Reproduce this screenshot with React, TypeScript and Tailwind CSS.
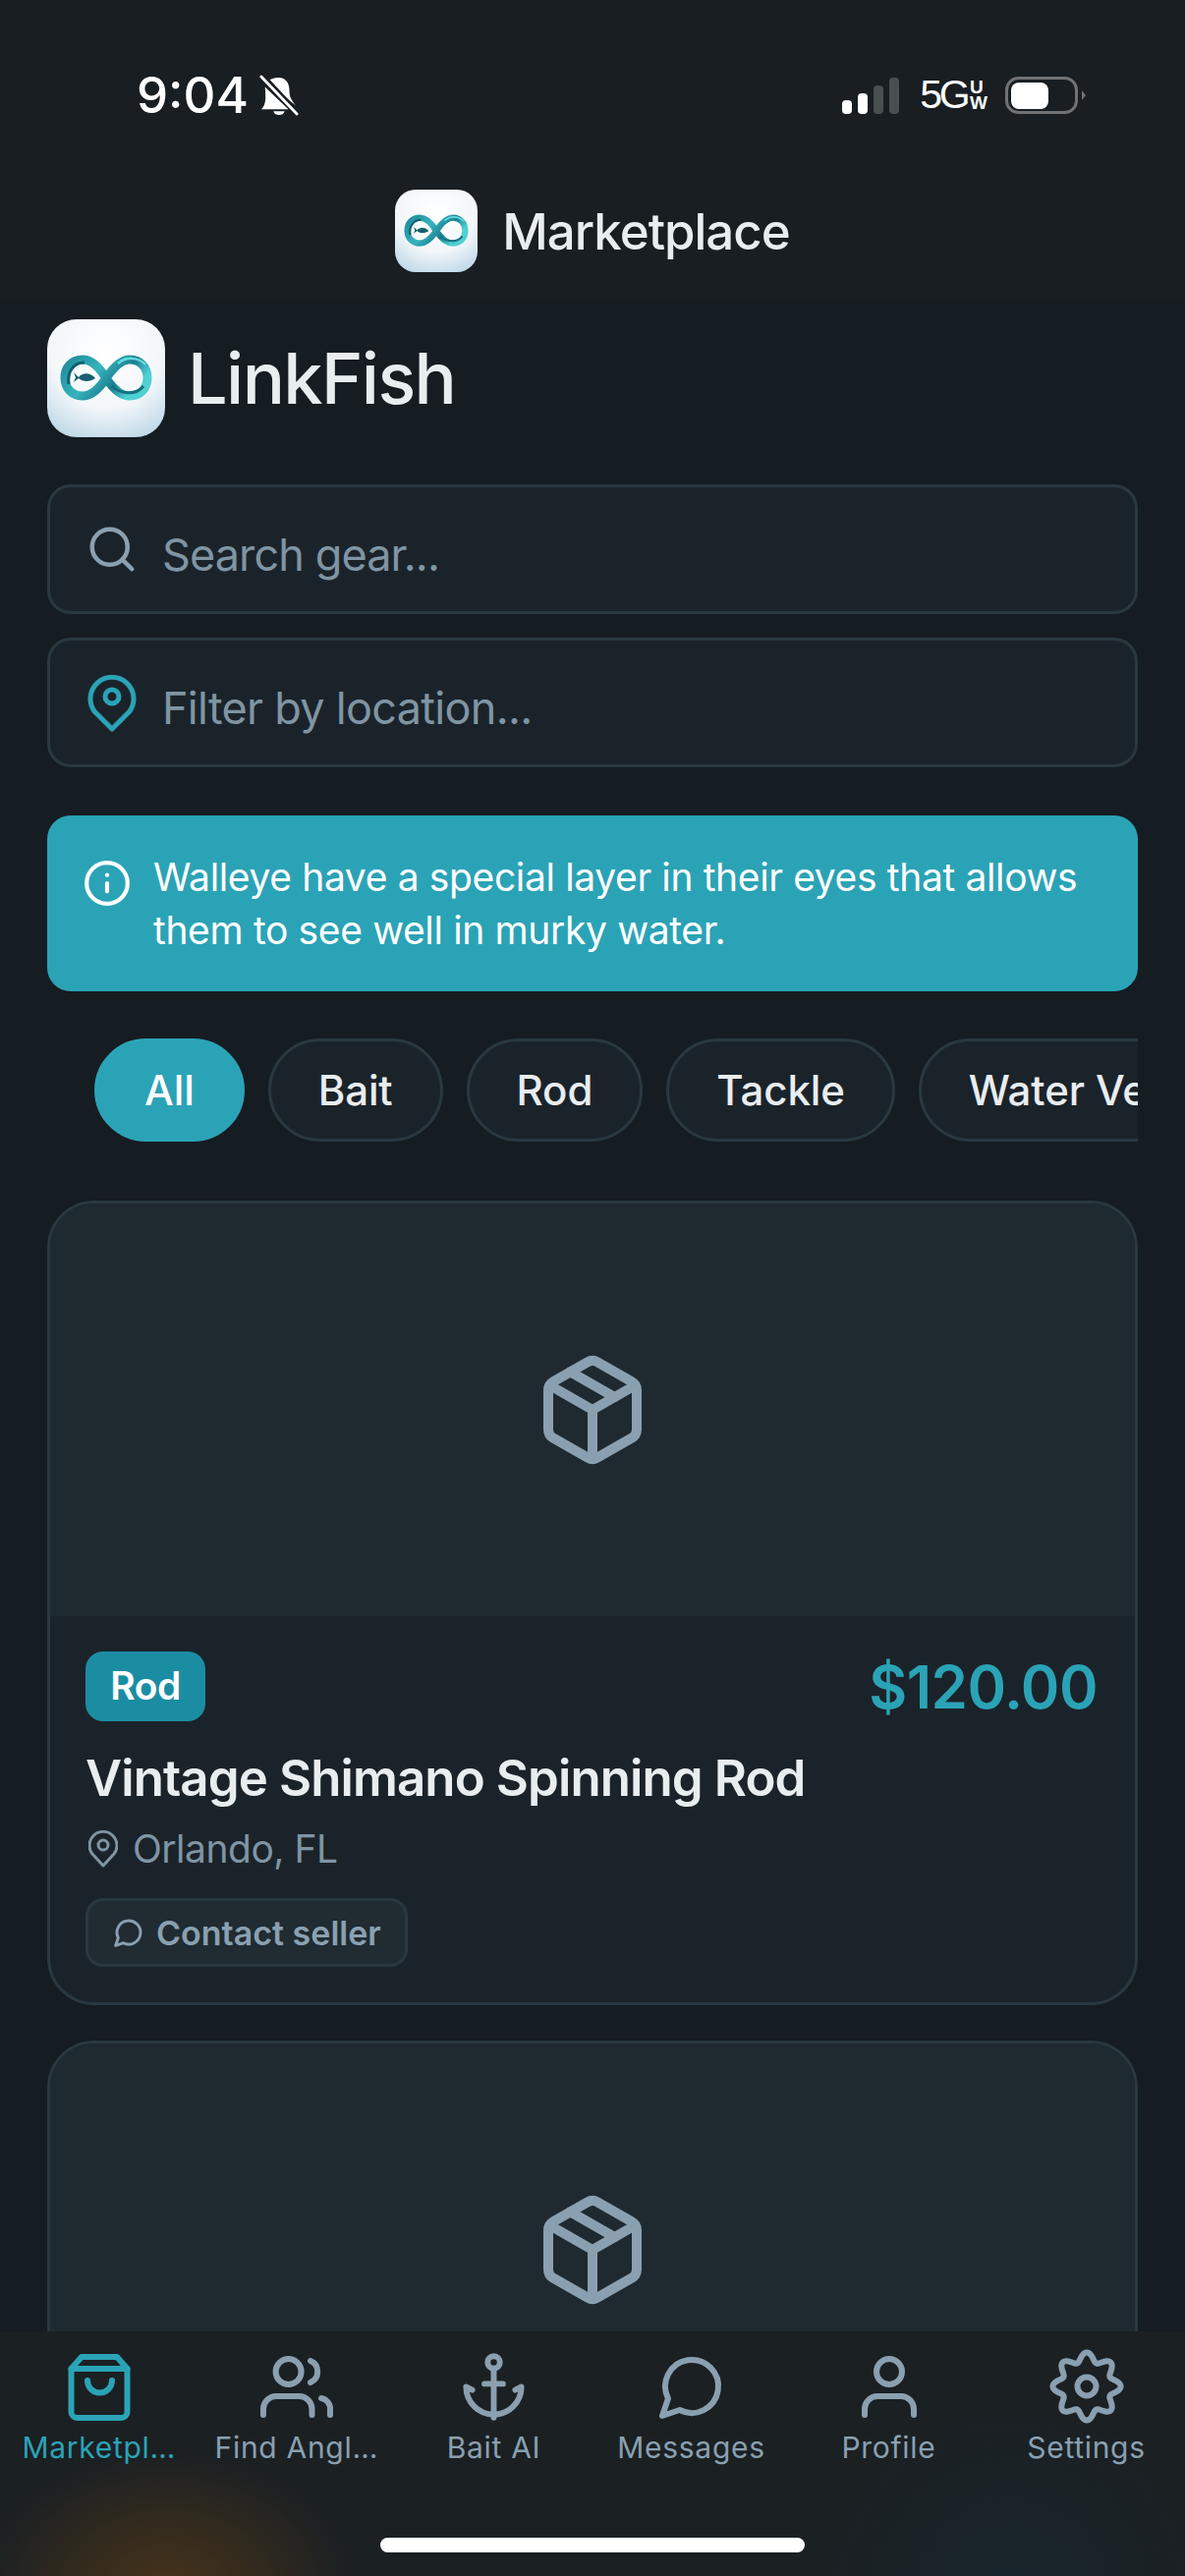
import { Anchor, Info, Package, Search } from "lucide-react";

const CHIPS = ["All", "Bait", "Rod", "Tackle", "Water Vessels"];

const gearPath = () => {
  const pts: string[] = [];
  for (let i = 0; i < 144; i++) {
    const a = (i / 144) * Math.PI * 2;
    const r = 30 + 4.6 * Math.cos(8 * a);
    const x = 39 + r * Math.sin(a);
    const y = 39 - r * Math.cos(a);
    pts.push(`${i === 0 ? "M" : "L"}${x.toFixed(2)} ${y.toFixed(2)}`);
  }
  return pts.join(" ") + " Z";
};

function Logo({ size, id, className }: { size: number; id: string; className: string }) {
  const loop =
    "M60 60C52 47 44 41 36 41C25 41 18 49 18 59.5C18 70 25 78 36 78C44 78 52 72 60 60C68 48 76 41 84 41C95 41 102 49 102 59.5C102 70 95 78 84 78C76 78 68 72 60 60Z";
  return (
    <svg width={size} height={size} viewBox="0 0 120 120" className={`shrink-0 ${className}`}>
      <defs>
        <radialGradient id={`${id}-bg`} cx="50%" cy="28%" r="85%">
          <stop offset="0%" stopColor="#ffffff" />
          <stop offset="55%" stopColor="#f3f7fa" />
          <stop offset="100%" stopColor="#b5d2e4" />
        </radialGradient>
        <linearGradient id={`${id}-ring`} x1="0" y1="0" x2="1" y2="0.4">
          <stop offset="0%" stopColor="#1f8c9b" />
          <stop offset="45%" stopColor="#37b4bd" />
          <stop offset="75%" stopColor="#1b7f90" />
          <stop offset="100%" stopColor="#4fd0d2" />
        </linearGradient>
      </defs>
      <rect width="120" height="120" fill={`url(#${id}-bg)`} />
      <path d={loop} fill="none" stroke={`url(#${id}-ring)`} strokeWidth="9" />
      <path d="M22 66C20 52 28 44 38 44" fill="none" stroke="#125f6e" strokeWidth="3" />
      <path d="M66 68C74 76 90 78 98 68" fill="none" stroke="#15707f" strokeWidth="3" />
      <path d="M72 45C80 38 92 38 100 46" fill="none" stroke="#63dcdc" strokeWidth="2.5" />
      <path d="M32 59C36 54 44 54 49 60C44 64 36 64 32 60L27 64L29 59L27 54Z" fill="#155f70" />
    </svg>
  );
}

function StatusBar() {
  return (
    <div className="flex h-[193px] items-center justify-between pl-[139px] pr-[101px]">
      <div className="flex items-center gap-[11px]">
        <span className="text-[51px] font-medium leading-none text-white">9:04</span>
        <svg width="40" height="44" viewBox="0 0 42 44" fill="#ffffff">
          <path d="M21 3c7 0 11 6 11 13 0 8 2 11 7 17L8 8c2-3 8-5 13-5zM6 13 31 37H2c5-5 5-11 4-24zM15 39h12c-1 3-3 4-6 4s-5-1-6-4z" />
          <path d="M3 1 41 42" stroke="#191e22" strokeWidth="6" />
          <path d="M2 2 40 42" stroke="#ffffff" strokeWidth="3" strokeLinecap="round" />
        </svg>
      </div>
      <div className="flex items-center">
        <svg width="58" height="37" viewBox="0 0 58 37" className="mt-[1px]">
          <rect x="0" y="23" width="10" height="14" rx="4" fill="#ffffff" />
          <rect x="16" y="16" width="10" height="21" rx="4" fill="#ffffff" />
          <rect x="32" y="8" width="10" height="29" rx="4" fill="#4a4f52" />
          <rect x="48" y="0" width="10" height="37" rx="4" fill="#4a4f52" />
        </svg>
        <span className="ml-[21px] font-['Liberation_Sans',sans-serif] text-[41px] leading-none tracking-[-3.5px] text-white">
          5G
        </span>
        <div className="ml-[3px] flex flex-col font-['Liberation_Sans',sans-serif] text-[19px] font-bold leading-[16px] text-white">
          <span>U</span>
          <span>W</span>
        </div>
        <svg width="82" height="38" viewBox="0 0 82 38" className="ml-[18px]">
          <rect x="1.500" y="1.500" width="71" height="35" rx="12" fill="none" stroke="#707274" strokeWidth="3" />
          <rect x="6" y="6" width="38" height="27" rx="8" fill="#ffffff" />
          <path d="M78 14l4 5-4 5z" fill="#707274" />
        </svg>
      </div>
    </div>
  );
}

function MarketHeader() {
  return (
    <header className="h-[305px] shrink-0 bg-[#191e22]">
      <StatusBar />
      <div className="flex h-[84px] items-center justify-center gap-[25px]">
        <Logo size={84} id="small" className="rounded-[21px]" />
        <h1 className="text-[51px] font-medium leading-none tracking-[-1px] text-[#e8edf0]">Marketplace</h1>
      </div>
    </header>
  );
}

function SearchFields() {
  return (
    <div className="mt-[48px] flex flex-col gap-[24px]">
      <div className="flex h-[132px] items-center gap-[24px] rounded-[24px] border-[3px] border-[#2a3840] bg-[#1b232a] pl-[36px]">
        <Search size={54} strokeWidth={2} className="shrink-0 text-[#8aa0b0]" />
        <span className="pt-[10px] text-[45px] leading-none tracking-[-0.9px] text-[#7f95a3]">Search gear...</span>
      </div>
      <div className="flex h-[132px] items-center gap-[24px] rounded-[24px] border-[3px] border-[#2a3840] bg-[#1b232a] pl-[36px]">
        <svg width="54" height="60" viewBox="0 0 54 60" fill="none" stroke="#2ba3b6" strokeWidth="5" className="shrink-0">
          <path d="M27 57 9 39A22 22 0 1 1 45 39Z" strokeLinejoin="round" />
          <circle cx="27" cy="24" r="7" />
        </svg>
        <span className="pt-[10px] text-[45px] leading-none tracking-[-0.7px] text-[#7f95a3]">Filter by location...</span>
      </div>
    </div>
  );
}

function FactBanner() {
  return (
    <div className="mt-[49px] flex h-[179px] items-start gap-[22px] rounded-[24px] bg-[#2ba3b6] px-[36px] pt-[36px]">
      <Info size={50} strokeWidth={2} className="mt-[8px] shrink-0 text-white" />
      <p className="text-[39px] leading-[54px] tracking-[-0.36px] text-white">
        Walleye have a special layer in their eyes that allows them to see well in murky water.
      </p>
    </div>
  );
}

function Chips() {
  return (
    <div className="mt-[48px] flex gap-[24px] overflow-hidden pl-[48px]">
      {CHIPS.map((chip, i) => (
        <div
          key={chip}
          className={`flex h-[105px] shrink-0 items-center rounded-full border-[3px] px-[48px] text-[42px] font-medium tracking-[-0.1px] whitespace-nowrap ${
            i === 0 ? "border-[#2ba3b6] bg-[#2ba3b6] text-white" : "border-[#2a3840] bg-[#1b232a] text-[#e8edf0]"
          }`}
        >
          {chip}
        </div>
      ))}
    </div>
  );
}

function GearCard() {
  return (
    <div className="shrink-0 overflow-hidden rounded-[48px] border-[3px] border-[#2a3840] bg-[#1b232a]">
      <div className="flex h-[420px] items-center justify-center bg-[#1f2a30]">
        <Package size={120} strokeWidth={2} className="text-[#8aa0b0]" />
      </div>
      <div className="px-[36px] pt-[36px] pb-[36px]">
        <div className="flex items-center justify-between">
          <span className="flex h-[71px] w-[122px] items-center justify-center rounded-[18px] bg-[#1b8da3] text-[39px] font-semibold tracking-[-0.5px] text-white">
            Rod
          </span>
          <span className="pr-[2px] text-[60px] leading-none font-semibold tracking-[-0.5px] text-[#2ba3b6]">$120.00</span>
        </div>
        <h2 className="mt-[25px] text-[51px] leading-[66px] font-semibold tracking-[-0.9px] text-[#e8edf0]">
          Vintage Shimano Spinning Rod
        </h2>
        <div className="mt-[15px] flex items-center gap-[15px] pl-[3px]">
          <svg width="30" height="38" viewBox="0 0 30 38" fill="none" stroke="#7f95a3" strokeWidth="3" className="shrink-0">
            <path d="M15 36 4 24A14 14 0 1 1 26 24Z" strokeLinejoin="round" />
            <circle cx="15" cy="15" r="5" />
          </svg>
          <span className="text-[39px] leading-[48px] tracking-[-0.5px] text-[#7f95a3]">Orlando, FL</span>
        </div>
        <button className="mt-[26px] flex h-[70px] w-[328px] items-center gap-[12px] rounded-[18px] border-[3px] border-[#2a3840] bg-[#202b32] pl-[25px] text-[34px] font-semibold text-[#8aa0b0]">
          <svg width="32" height="32" viewBox="0 0 24 24" fill="none" stroke="#8aa0b0" strokeWidth="2.200" strokeLinejoin="round" className="shrink-0">
            <path d="M7.900 20A9 9 0 1 0 4 16.100L2 22Z" />
          </svg>
          Contact seller
        </button>
      </div>
    </div>
  );
}

function TabIcon({ children }: { children: React.ReactNode }) {
  return (
    <svg width="78" height="78" viewBox="0 0 78 78" fill="none" stroke="currentColor" strokeWidth="6" strokeLinecap="round" strokeLinejoin="round">
      {children}
    </svg>
  );
}

const TABS = [
  {
    label: "Marketplace",
    active: true,
    icon: (
      <TabIcon>
        <path d="M21 9H57L67.500 21V65A6 6 0 0 1 61.500 71H16.500A6 6 0 0 1 10.500 65V21Z" />
        <path d="M10.500 21H67.500" />
        <path d="M27 33A12.500 12.500 0 0 0 52 33" />
      </TabIcon>
    ),
  },
  {
    label: "Find Anglers",
    icon: (
      <TabIcon>
        <circle cx="30.600" cy="24" r="13" />
        <path d="M5 68V62A13 13 0 0 1 18 49H41.500A13 13 0 0 1 54.500 62V68" />
        <path d="M53 13A12 12 0 0 1 53 35" />
        <path d="M73 68V63A11 11 0 0 0 64 51" />
      </TabIcon>
    ),
  },
  { label: "Bait AI", icon: <Anchor size={75} strokeWidth={1.9} /> },
  {
    label: "Messages",
    icon: (
      <svg width="72" height="72" viewBox="0 0 24 24" fill="none" stroke="currentColor" strokeWidth="2" strokeLinejoin="round" className="m-[3px]">
        <path d="M7.900 20A9 9 0 1 0 4 16.100L2 22Z" />
      </svg>
    ),
  },
  {
    label: "Profile",
    icon: (
      <TabIcon>
        <circle cx="39" cy="24" r="13" />
        <path d="M14 68V62A13 13 0 0 1 27 49H51A13 13 0 0 1 64 62V68" />
      </TabIcon>
    ),
  },
  {
    label: "Settings",
    icon: (
      <TabIcon>
        <path d={gearPath()} />
        <circle cx="39" cy="39" r="9.500" />
      </TabIcon>
    ),
  },
];

function TabBar() {
  return (
    <nav className="grid h-[249px] shrink-0 grid-cols-6 bg-[radial-gradient(ellipse_190px_140px_at_170px_262px,#46331a_0%,#342b1d_45%,transparent_100%),radial-gradient(circle_at_1030px_270px,#18252c_0%,transparent_200px)] bg-[#1b2023] pt-[17px]">
      {TABS.map((tab) => (
        <div
          key={tab.label}
          className={`flex min-w-0 flex-col items-center ${tab.active ? "text-[#2ba3b6]" : "text-[#8aa0b0]"}`}
        >
          <div className="flex h-[78px] items-center justify-center">{tab.icon}</div>
          <span
            className={`mt-[4px] truncate text-center text-[30px] leading-[38px] tracking-[0.7px] ${
              tab.active ? "w-[156px]" : "w-[166px]"
            }`}
          >
            {tab.label}
          </span>
        </div>
      ))}
    </nav>
  );
}

export default function App() {
  return (
    <div className="relative flex h-[2622px] w-[1206px] flex-col overflow-hidden bg-[#151c22] font-[Inter,sans-serif]">
      <MarketHeader />
      <main className="min-h-0 flex-1 overflow-hidden px-[48px] pt-[20px]">
        <div className="flex items-center gap-[23px]">
          <Logo size={120} id="big" className="rounded-[30px]" />
          <span className="text-[72px] leading-none font-medium tracking-[-1.6px] text-[#e8edf0]">LinkFish</span>
        </div>
        <SearchFields />
        <FactBanner />
        <Chips />
        <div className="mt-[60px] flex flex-col gap-[36px]">
          <GearCard />
          <GearCard />
        </div>
      </main>
      <TabBar />
      <div className="absolute bottom-[24px] left-[387px] h-[15px] w-[432px] rounded-full bg-white" />
    </div>
  );
}
